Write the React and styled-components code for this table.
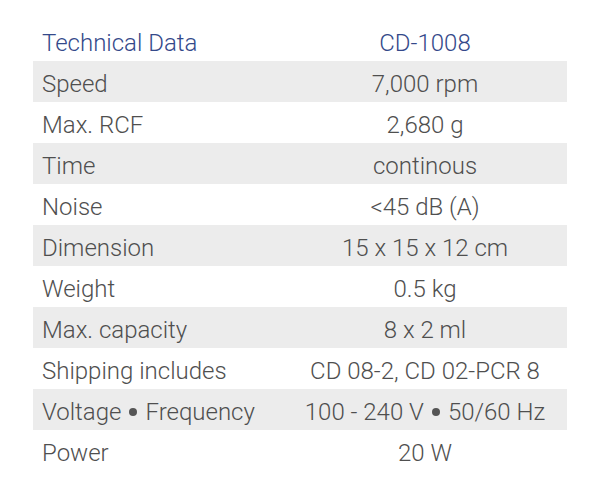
import React from 'react';
import styled, { createGlobalStyle } from 'styled-components';

const GlobalStyle = createGlobalStyle`
  html, body {
    margin: 0;
    padding: 0;
    background: #fff;
  }
`;

const Page = styled.div`
  width: 607px;
  height: 489px;
  padding: 20px 40px 0 33px;
  box-sizing: border-box;
  font-family: Roboto, "Liberation Sans", Arial, sans-serif;
  font-weight: 300;
`;

const Table = styled.div`
  width: 534px;
  display: grid;
  grid-template-columns: 250px 1fr;
`;

const Row = styled.div`
  display: contents;
`;

const Cell = styled.div`
  height: 41px;
  display: flex;
  align-items: center;
  padding: 5px 0 0 ${p => (p.$value ? 0 : 9)}px;
  box-sizing: border-box;
  justify-content: ${p => (p.$value ? 'center' : 'flex-start')};
  background: ${p => (p.$shade ? '#ececec' : 'transparent')};
  color: ${p => (p.$head ? '#34498a' : '#4f4f4f')};
  font-size: 24px;
  white-space: nowrap;
`;

const Bullet = styled.span`
  display: inline-block;
  width: 8px;
  height: 8px;
  margin: 0 8px 3px;
  border-radius: 50%;
  background: #555;
  vertical-align: middle;
`;

const withBullets = text => {
  const parts = text.split(' • ');
  return parts.map((part, i) => (
    <React.Fragment key={i}>
      {i > 0 && <Bullet />}
      {part}
    </React.Fragment>
  ));
};

const rows = [
  ['Speed', '7,000 rpm'],
  ['Max. RCF', '2,680 g'],
  ['Time', 'continous'],
  ['Noise', '<45 dB (A)'],
  ['Dimension', '15 x 15 x 12 cm'],
  ['Weight', '0.5 kg'],
  ['Max. capacity', '8 x 2 ml'],
  ['Shipping includes', 'CD 08-2, CD 02-PCR 8'],
  ['Voltage • Frequency', '100 - 240 V • 50/60 Hz'],
  ['Power', '20 W'],
];

export default function App() {
  return (
    <>
      <GlobalStyle />
      <Page>
        <Table>
          <Row>
            <Cell $head>Technical Data</Cell>
            <Cell $head $value>CD-1008</Cell>
          </Row>
          {rows.map(([label, value], i) => (
            <Row key={label}>
              <Cell $shade={i % 2 === 0}><span>{withBullets(label)}</span></Cell>
              <Cell $shade={i % 2 === 0} $value><span>{withBullets(value)}</span></Cell>
            </Row>
          ))}
        </Table>
      </Page>
    </>
  );
}
